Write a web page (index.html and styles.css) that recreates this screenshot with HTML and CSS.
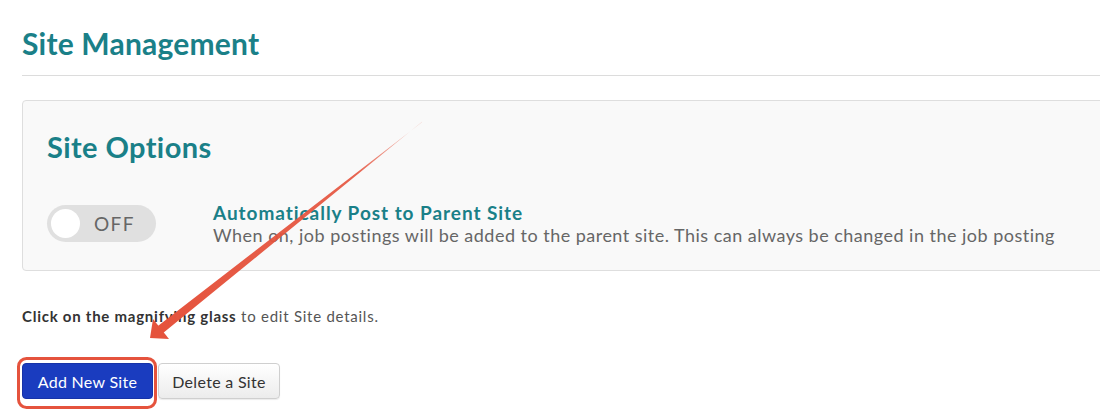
FILE: index.html
```html
<!DOCTYPE html>
<html lang="en">
<head>
<meta charset="utf-8">
<title>Site Management</title>
<link rel="stylesheet" href="styles.css">
</head>
<body>
<main class="page">
  <h1 class="page-title">Site Management</h1>
  <hr class="rule">
  <section class="panel">
    <h2 class="panel-title">Site Options</h2>
    <div class="option">
      <div class="toggle"><span class="knob"></span><span class="toggle-label">OFF</span></div>
      <div class="option-text">
        <div class="option-title">Automatically Post to Parent Site</div>
        <div class="option-desc">When on, job postings will be added to the parent site. This can always be changed in the job posting</div>
      </div>
    </div>
  </section>
  <p class="hint"><strong>Click on the magnifying glass</strong> to edit Site details.</p>
  <div class="actions">
    <button class="btn btn-primary">Add New Site</button>
    <button class="btn btn-default">Delete a Site</button>
  </div>
</main>
<svg class="annotation" width="1100" height="414" viewBox="0 0 1100 414">
  <defs>
    <linearGradient id="fade" x1="422" y1="122" x2="160" y2="330" gradientUnits="userSpaceOnUse">
      <stop offset="0" stop-color="#e5533d" stop-opacity="0.25"/>
      <stop offset="0.25" stop-color="#e5533d" stop-opacity="0.9"/>
      <stop offset="1" stop-color="#e5533d"/>
    </linearGradient>
  </defs>
  <polygon points="422.3,121.6 421.7,122.4 157.9,325.9 163.1,333.1" fill="url(#fade)"/>
  <polygon points="150,338 153,319 169,339" fill="#e5533d"/>
  <rect x="18.5" y="358.5" width="137" height="49" rx="8" ry="8" fill="none" stroke="#e5533d" stroke-width="3"/>
</svg>
</body>
</html>
```
FILE: styles.css
```css
html, body {
  margin: 0;
  padding: 0;
  background: #fff;
  overflow: hidden;
}
body {
  font-family: Lato, "Liberation Sans", sans-serif;
  color: #333;
  width: 1100px;
  height: 414px;
  position: relative;
}
.page {
  padding: 25px 0 0 22px;
}
.page-title {
  margin: 0;
  font-size: 30px;
  line-height: 36px;
  font-weight: 700;
  color: #1a8088;
  letter-spacing: 0.2px;
}
.rule {
  margin: 14px 0 0 0;
  border: 0;
  border-top: 1px solid #dcdcdc;
  height: 0;
}
.panel {
  margin: 24px -6px 0 0;
  background: #f9f9f9;
  border: 1px solid #dedede;
  border-radius: 4px;
  padding: 28px 0 24px 24px;
}
.panel-title {
  margin: 0;
  font-size: 29px;
  line-height: 35px;
  font-weight: 700;
  color: #1a8088;
  letter-spacing: 0.4px;
}
.option {
  display: flex;
  align-items: flex-start;
  margin-top: 38px;
}
.toggle {
  margin-top: 3px;
  width: 109px;
  height: 37px;
  border-radius: 19px;
  background: #e0e0e0;
  display: flex;
  align-items: center;
  padding-left: 4px;
  box-sizing: border-box;
  flex-shrink: 0;
}
.knob {
  width: 29px;
  height: 29px;
  border-radius: 50%;
  background: #fff;
}
.toggle-label {
  margin-left: 14px;
  font-size: 19px;
  color: #666;
  letter-spacing: 1.4px;
}
.option-text {
  margin-left: 57px;
}
.option-title {
  font-size: 19px;
  line-height: 22px;
  font-weight: 700;
  color: #1a8088;
  letter-spacing: 0.95px;
}
.option-desc {
  font-size: 18px;
  line-height: 22px;
  color: #666;
  letter-spacing: 0.48px;
}
.hint {
  margin: 35px 0 0 0;
  font-size: 15px;
  line-height: 20px;
  color: #555;
  letter-spacing: 0.75px;
}
.hint strong {
  color: #333;
  font-weight: 700;
}
.actions {
  margin-top: 37px;
  display: flex;
  gap: 5px;
}
.btn {
  font-family: Lato, "Liberation Sans", sans-serif;
  font-size: 16px;
  letter-spacing: 0.3px;
  height: 36px;
  border-radius: 4px;
  padding: 0 12px;
  cursor: pointer;
}
.btn-primary {
  width: 131px;
  background: #1a3cbf;
  color: #fff;
  border: 1px solid #1633a8;
}
.btn-default {
  width: 122px;
  background: linear-gradient(#ffffff, #ececec);
  color: #333;
  border: 1px solid #cfcfcf;
  box-shadow: 0 1px 1px rgba(0,0,0,0.08);
}
.annotation {
  position: absolute;
  left: 0;
  top: 0;
  pointer-events: none;
}
```
